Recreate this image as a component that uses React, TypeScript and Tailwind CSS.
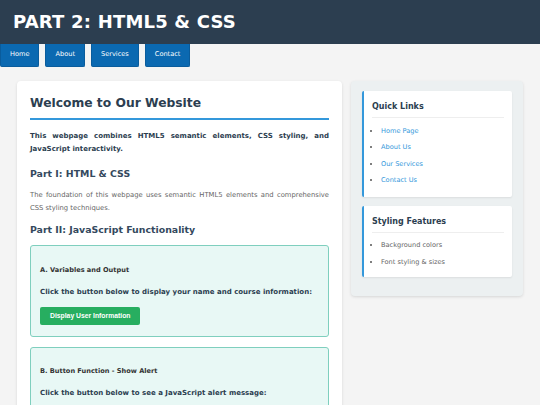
export default function App() {
  const dv = { fontFamily: '"DejaVu Sans", Verdana, sans-serif' }
  return (
    <div className="min-h-[405px] bg-[#f4f4f4]" style={dv}>
      <header className="flex h-[44px] items-center bg-[#2c3e50] px-[13px]">
        <h1 className="text-[18px] font-bold leading-none tracking-[0.2px] text-white">PART 2: HTML5 &amp; CSS</h1>
      </header>

      <nav className="flex gap-[6px]">
        {['Home', 'About', 'Services', 'Contact'].map((item) => (
          <a
            key={item}
            className="flex h-[23px] items-center rounded-b-[2px] border border-t-0 border-[#0a5c9c] bg-[#0b69b1] px-[9px] text-[6.6px] text-white"
          >
            {item}
          </a>
        ))}
      </nav>

      <div className="flex items-start gap-[9px] px-[17px] pt-[14px]">
        <main className="w-[325px] shrink-0 rounded-[4px] bg-white px-[13px] pb-[20px] pt-[14px] shadow-[0_1px_3px_rgba(0,0,0,0.12)]">
          <h2 className="border-b-2 border-[#3498db] pb-[7px] text-[12.3px] font-bold leading-[16px] text-[#2c3e50]">
            Welcome to Our Website
          </h2>
          <p className="mt-[10px] text-justify text-[7px] font-bold leading-[13px] text-[#2c3e50]">
            This webpage combines HTML5 semantic elements, CSS styling, and JavaScript interactivity.
          </p>

          <h3 className="mt-[12px] text-[9.4px] font-bold leading-[12px] text-[#34495e]">Part I: HTML &amp; CSS</h3>
          <p className="mt-[9px] text-justify text-[6.8px] leading-[13px] text-[#666]">
            The foundation of this webpage uses semantic HTML5 elements and comprehensive CSS styling techniques.
          </p>

          <h3 className="mt-[9px] text-[9.4px] font-bold leading-[12px] text-[#34495e]">
            Part II: JavaScript Functionality
          </h3>

          <section className="mt-[9px] rounded-[3px] border border-[#7fcfbe] bg-[#e8f8f5] px-[9px] pb-[11px] pt-[19px]">
            <h4 className="text-[6.6px] font-bold leading-[10px] text-[#333]">A. Variables and Output</h4>
            <p className="mt-[12px] text-[7px] font-bold leading-[10px] text-[#2c3e50]">
              Click the button below to display your name and course information:
            </p>
            <button
              className="mt-[10px] h-[18px] rounded-[2px] bg-[#27ae60] px-[10px] text-[6.8px] font-bold text-white"
              style={{ fontFamily: '"Liberation Sans", Arial, sans-serif' }}
            >
              Display User Information
            </button>
          </section>

          <section className="mt-[10px] rounded-[3px] border border-[#7fcfbe] bg-[#e8f8f5] px-[9px] pb-[30px] pt-[18px]">
            <h4 className="text-[6.6px] font-bold leading-[10px] text-[#333]">B. Button Function - Show Alert</h4>
            <p className="mt-[12px] text-[7px] font-bold leading-[10px] text-[#2c3e50]">
              Click the button below to see a JavaScript alert message:
            </p>
          </section>
        </main>

        <aside className="flex w-[172px] shrink-0 flex-col gap-[9px] rounded-[4px] bg-[#ecf0f1] px-[11px] pb-[19px] pt-[10px] shadow-[0_1px_3px_rgba(0,0,0,0.12)]">
          <div className="rounded-[2px] border-l-2 border-[#3498db] bg-white pb-[9px] pl-[8px] pr-[8px] pt-[11px] shadow-[0_1px_2px_rgba(0,0,0,0.08)]">
            <h3 className="border-b border-[#eee] pb-[5px] text-[8px] font-bold leading-[10px] text-[#2c3e50]">Quick Links</h3>
            <ul className="mt-[5px] list-disc pl-[9px] text-[6.6px] leading-[16.3px] text-[#3498db] marker:text-[#555]">
              <li>Home Page</li>
              <li>About Us</li>
              <li>Our Services</li>
              <li>Contact Us</li>
            </ul>
          </div>
          <div className="rounded-[2px] border-l-2 border-[#3498db] bg-white pb-[7px] pl-[8px] pr-[8px] pt-[11px] shadow-[0_1px_2px_rgba(0,0,0,0.08)]">
            <h3 className="border-b border-[#eee] pb-[5px] text-[8px] font-bold leading-[10px] text-[#2c3e50]">
              Styling Features
            </h3>
            <ul className="mt-[4px] list-disc pl-[9px] text-[6.6px] leading-[16.5px] text-[#666] marker:text-[#555]">
              <li>Background colors</li>
              <li>Font styling &amp; sizes</li>
            </ul>
          </div>
        </aside>
      </div>
    </div>
  )
}
